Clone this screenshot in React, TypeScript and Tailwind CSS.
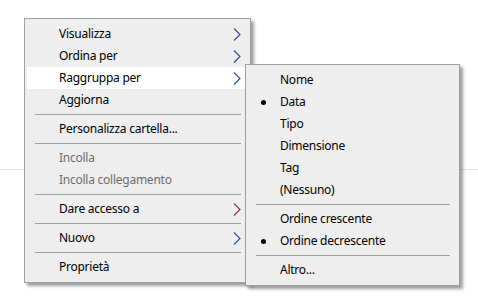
import React from "react";

type Item =
  | { kind: "item"; label: string; sub?: boolean; subColor?: string; disabled?: boolean; hover?: boolean; bullet?: boolean }
  | { kind: "sep" };

const Chevron = ({ color }: { color: string }) => (
  <svg width="8" height="13" viewBox="0 0 8 13" className="ml-auto mr-[7px] shrink-0">
    <polyline points="1,0.5 7,6.5 1,12.5" fill="none" stroke={color} strokeWidth="1.15" />
  </svg>
);

const Menu = ({ items, className }: { items: Item[]; className: string }) => (
  <div
    className={
      "absolute flex flex-col bg-[#eeeeee] border border-[#a0a0a0] py-[4px] px-[2px] shadow-[3px_3px_3px_rgba(0,0,0,0.38)] " +
      className
    }
  >
    {items.map((it, i) =>
      it.kind === "sep" ? (
        <div key={i} className="h-[7px] pt-[3px] pl-[8px] pr-[7px]">
          <div className="h-px bg-[#a0a0a0]" />
        </div>
      ) : (
        <div
          key={i}
          className={
            "h-[22px] flex items-center text-[12px] tracking-[-0.25px] " +
            (it.hover ? "bg-white " : "") +
            (it.disabled ? "text-[#6d6d6d]" : "text-black")
          }
        >
          <div className="w-[32px] shrink-0 flex items-center pl-[13px]">
            {it.bullet && <div className="w-[5px] h-[5px] rounded-full bg-black" />}
          </div>
          <span className="leading-[22px]">{it.label}</span>
          {it.sub && <Chevron color={it.subColor ?? "#2f5390"} />}
        </div>
      )
    )}
  </div>
);

const mainItems: Item[] = [
  { kind: "item", label: "Visualizza", sub: true },
  { kind: "item", label: "Ordina per", sub: true },
  { kind: "item", label: "Raggruppa per", sub: true, hover: true },
  { kind: "item", label: "Aggiorna" },
  { kind: "sep" },
  { kind: "item", label: "Personalizza cartella..." },
  { kind: "sep" },
  { kind: "item", label: "Incolla", disabled: true },
  { kind: "item", label: "Incolla collegamento", disabled: true },
  { kind: "sep" },
  { kind: "item", label: "Dare accesso a", sub: true, subColor: "#8a3a3a" },
  { kind: "sep" },
  { kind: "item", label: "Nuovo", sub: true },
  { kind: "sep" },
  { kind: "item", label: "Proprietà" },
];

const subItems: Item[] = [
  { kind: "item", label: "Nome" },
  { kind: "item", label: "Data", bullet: true },
  { kind: "item", label: "Tipo" },
  { kind: "item", label: "Dimensione" },
  { kind: "item", label: "Tag" },
  { kind: "item", label: "(Nessuno)" },
  { kind: "sep" },
  { kind: "item", label: "Ordine crescente" },
  { kind: "item", label: "Ordine decrescente", bullet: true },
  { kind: "sep" },
  { kind: "item", label: "Altro..." },
];

export default function App() {
  return (
    <div
      className="relative w-[478px] h-[306px] bg-white overflow-hidden"
      style={{ fontFamily: '"Noto Sans", "Open Sans", sans-serif' }}
    >
      <div className="pt-[169px]">
        <div className="h-px bg-[#e3e3e3]" />
      </div>
      <Menu items={mainItems} className="left-[24px] top-[18px] w-[227px]" />
      <Menu items={subItems} className="left-[245px] top-[64px] w-[215px]" />
    </div>
  );
}
